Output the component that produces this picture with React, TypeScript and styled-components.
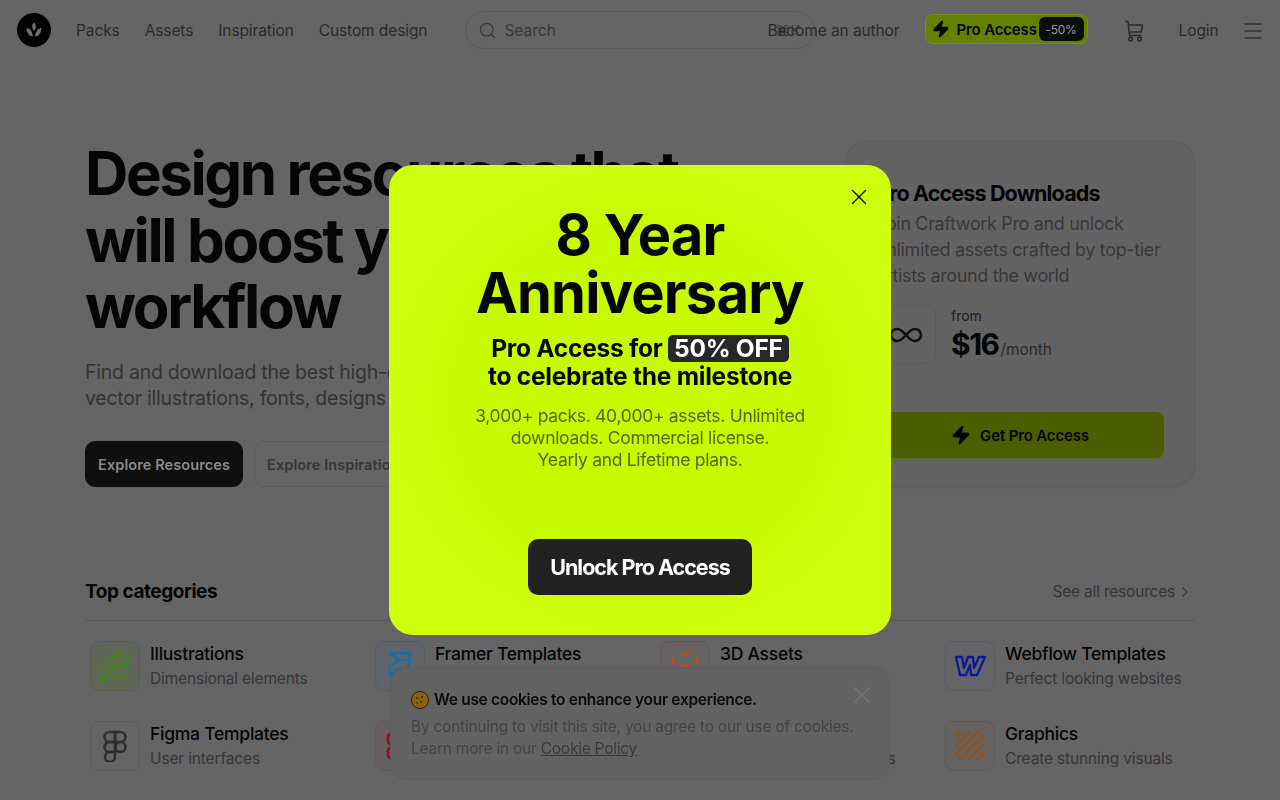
import React from 'react';
import styled, { createGlobalStyle } from 'styled-components';
import { ChevronRight, Infinity as InfinityIcon, Menu, PenTool, Search, X, Zap } from 'lucide-react';

// the page sits dimmed behind the promo modal, so its palette is the dimmed one
const GlobalStyle = createGlobalStyle`
  html, body {
    margin: 0;
    height: 100%;
    overflow: hidden;
    background: #656565;
    font-family: Inter, "Liberation Sans", sans-serif;
    color: #050505;
  }
  * { box-sizing: border-box; }
`;

const Header = styled.header`
  height: 60px;
  padding: 0 15px 0 17px;
  display: flex;
  align-items: center;
`;

const Logo = styled.div`
  width: 34px;
  height: 34px;
  border-radius: 50%;
  background: #020202;
  display: flex;
  align-items: center;
  justify-content: center;
  margin-right: 25px;
  svg { display: block; }
`;

const Nav = styled.nav`
  display: flex;
  gap: 25px;
  padding-top: 2px;
`;

const NavLink = styled.span`
  font-size: 15.5px;
  line-height: 20px;
  color: #2a2a2a;
  white-space: nowrap;
  letter-spacing: -0.1px;
`;

const SearchBox = styled.div`
  width: 350px;
  height: 38px;
  margin-left: 38px;
  padding: 0 14px 0 12px;
  border: 1px solid #5a5a5a;
  border-radius: 19px;
  display: flex;
  align-items: center;
  gap: 7px;
  flex-shrink: 0;
  color: #383838;
  font-size: 15.5px;
`;

const Shortcut = styled.span`
  margin-left: auto;
  font-size: 15px;
  color: #383838;
`;

const HeaderRight = styled.div`
  margin-left: -48px;
  flex: 1;
  display: flex;
  align-items: center;
  padding-top: 2px;
`;

const ProButton = styled.div`
  width: 163px;
  height: 30px;
  margin: -4px 0 0 25px;
  padding: 0 3px 0 6px;
  border-radius: 8px;
  background: #657f00;
  border: 1px solid #76920a;
  display: flex;
  align-items: center;
  font-size: 15px;
  font-weight: 600;
  letter-spacing: -0.15px;
  color: #050505;
  white-space: nowrap;
`;

const ProBolt = styled(Zap)`
  margin-right: 7px;
  flex-shrink: 0;
`;

const Discount = styled.span`
  margin-left: auto;
  height: 24px;
  flex: 0 0 45px;
  border-radius: 6px;
  background: #0d0d0d;
  color: #989898;
  font-size: 12px;
  font-weight: 400;
  letter-spacing: -0.3px;
  display: flex;
  align-items: center;
  justify-content: center;
`;

const CartGlyph = styled.svg`
  margin-left: 36px;
  flex-shrink: 0;
`;

const LoginLink = styled(NavLink)`
  margin-left: 35px;
`;

const BurgerIcon = styled(Menu)`
  margin-left: auto;
  color: #333333;
`;

const Main = styled.main`
  width: 1110px;
  margin: 0 auto;
`;

const Hero = styled.section`
  padding-top: 81px;
  display: flex;
  justify-content: space-between;
`;

const HeroText = styled.div`
  margin-top: -1px;
`;

const Headline = styled.h1`
  margin: 0;
  font-size: 60px;
  line-height: 66.5px;
  font-weight: 700;
  letter-spacing: -2.4px;
  white-space: nowrap;
`;

const Lead = styled.p`
  margin: 19px 0 0;
  font-size: 19.5px;
  line-height: 26px;
  color: #333333;
  letter-spacing: -0.25px;
  white-space: nowrap;
`;

const HeroButtons = styled.div`
  margin-top: 30px;
  display: flex;
  gap: 11px;
`;

const HeroButton = styled.div<{ $dark?: boolean }>`
  height: 46px;
  padding: 1px 12px 0;
  border-radius: 10px;
  display: flex;
  align-items: center;
  font-size: 14.5px;
  font-weight: 600;
  letter-spacing: 0.1px;
  white-space: nowrap;
  background: ${(p) => (p.$dark ? '#0f0f0f' : '#656565')};
  color: ${(p) => (p.$dark ? '#8a8a8a' : '#363636')};
  border: 1px solid ${(p) => (p.$dark ? '#0f0f0f' : '#5c5c5c')};
`;

const PriceCard = styled.aside`
  width: 350px;
  height: 345px;
  padding: 38px 30px 0;
  border: 1px solid #5e5e5e;
  border-radius: 22px;
  background: #636363;
  box-shadow: 0 2px 2px rgba(0, 0, 0, 0.06);
`;

const CardTitle = styled.h2`
  margin: 0;
  font-size: 21.5px;
  line-height: 26px;
  font-weight: 700;
  letter-spacing: -0.85px;
  white-space: nowrap;
`;

const CardText = styled.p`
  margin: 5px 0 0;
  font-size: 18px;
  line-height: 26px;
  color: #383838;
  letter-spacing: -0.35px;
  white-space: nowrap;
`;

const PriceRow = styled.div`
  margin-top: 16px;
  display: flex;
  align-items: flex-start;
  gap: 15px;
`;

const InfinityBox = styled.div`
  width: 60px;
  height: 59px;
  border: 1px solid #5c5c5c;
  border-radius: 10px;
  display: flex;
  align-items: center;
  justify-content: center;
  color: #111111;
`;

const PriceCol = styled.div`
  display: flex;
  flex-direction: column;
`;

const PriceFrom = styled.span`
  font-size: 14px;
  line-height: 22px;
  color: #1c1c1c;
`;

const PriceLine = styled.div`
  display: flex;
  align-items: baseline;
`;

const PriceValue = styled.span`
  font-size: 30px;
  line-height: 34px;
  font-weight: 700;
  letter-spacing: -1.5px;
`;

const PricePeriod = styled.span`
  font-size: 15.5px;
  color: #2a2a2a;
  letter-spacing: -0.1px;
  margin-left: 2px;
`;

const GetButton = styled.div`
  margin-top: 48px;
  height: 46px;
  width: 288px;
  border-radius: 8px;
  background: #4c5e00;
  box-shadow: 0 1px 0 #5c6f08;
  display: flex;
  align-items: center;
  justify-content: center;
  gap: 9px;
  font-size: 15px;
  font-weight: 600;
  letter-spacing: -0.15px;
`;

const SectionHead = styled.div`
  margin-top: 88px;
  height: 46px;
  padding-bottom: 11px;
  display: flex;
  align-items: center;
  justify-content: space-between;
  border-bottom: 1px solid #595959;
`;

const SectionTitle = styled.h3`
  margin: 0;
  font-size: 19px;
  font-weight: 700;
  letter-spacing: -0.45px;
`;

const SeeAll = styled.span`
  display: flex;
  align-items: center;
  gap: 2px;
  margin-right: 2px;
  font-size: 15.5px;
  color: #353535;
  letter-spacing: -0.2px;
`;

const CategoryGrid = styled.div`
  margin-top: 20px;
  padding-left: 5px;
  display: grid;
  grid-template-columns: repeat(4, 285px);
  row-gap: 30px;
`;

const Category = styled.div`
  display: flex;
  align-items: center;
  gap: 10px;
  height: 50px;
`;

const Tile = styled.div<{ $tint: string }>`
  width: 50px;
  height: 50px;
  border-radius: 9px;
  border: 1px solid #5c5c5c;
  background: ${(p) => p.$tint};
  flex-shrink: 0;
  display: flex;
  align-items: center;
  justify-content: center;
`;

const NibIcon = styled(PenTool)`
  color: #458518;
  transform: rotate(-90deg);
`;

const CategoryLabel = styled.div`
  padding-top: 2px;
`;

const CategoryTitle = styled.div`
  font-size: 17.5px;
  line-height: 24px;
  font-weight: 500;
  letter-spacing: -0.25px;
  white-space: nowrap;
`;

const CategorySub = styled.div`
  margin-top: 1px;
  font-size: 15.5px;
  line-height: 24px;
  color: #363636;
  letter-spacing: -0.15px;
  white-space: nowrap;
`;

const Backdrop = styled.div`
  position: fixed;
  inset: 0;
  display: flex;
  align-items: center;
  justify-content: center;
  z-index: 10;
`;

const Modal = styled.div`
  position: relative;
  width: 502px;
  height: 470px;
  padding-top: 41px;
  border-radius: 24px;
  background: radial-gradient(closest-side, #c8f900 0%, #c9fb00 75%, #cfff0c 100%);
  text-align: center;
  display: flex;
  flex-direction: column;
  align-items: center;
`;

const ModalClose = styled(X)`
  position: absolute;
  top: 19px;
  right: 19px;
  color: #101010;
`;

const ModalTitle = styled.h2`
  margin: 0;
  font-size: 56px;
  line-height: 58px;
  font-weight: 700;
  letter-spacing: -0.8px;
`;

const ModalSub = styled.p`
  margin: 12px 0 0;
  font-size: 24.5px;
  line-height: 28px;
  font-weight: 700;
  letter-spacing: -0.25px;
`;

const OffBadge = styled.span`
  display: inline-block;
  padding: 0 6px;
  line-height: 27px;
  border-radius: 5px;
  background: #26282a;
  color: #ffffff;
`;

const ModalText = styled.p`
  margin: 15px 0 0;
  font-size: 17.5px;
  line-height: 22px;
  letter-spacing: -0.3px;
  color: #566800;
`;

const UnlockButton = styled.div`
  margin-top: 68px;
  width: 224px;
  height: 56px;
  border-radius: 10px;
  background: #222222;
  color: #ffffff;
  font-size: 21.5px;
  font-weight: 700;
  letter-spacing: -1px;
  display: flex;
  align-items: center;
  justify-content: center;
`;

const CookieBar = styled.div`
  position: fixed;
  left: 390px;
  top: 667px;
  width: 500px;
  height: 113px;
  padding: 21px 20px 0;
  border-radius: 16px;
  border: 1px solid #5e5e5e;
  background: #636363;
  z-index: 11;
`;

const CookieClose = styled(X)`
  position: absolute;
  top: 13px;
  right: 13px;
  color: #767676;
`;

const CookieTitle = styled.div`
  display: flex;
  align-items: center;
  gap: 5px;
  font-size: 15.5px;
  line-height: 22px;
  font-weight: 600;
  letter-spacing: -0.3px;
  color: #0b0b0b;
`;

const CookieText = styled.p`
  margin: 5px 0 0;
  font-size: 15.5px;
  line-height: 22px;
  color: #444444;
  letter-spacing: -0.24px;
  white-space: nowrap;
`;

const CookieLink = styled.span`
  text-decoration: underline;
  color: #3a3a3a;
`;

const FramerGlyph = () => (
  <svg width="30" height="30" viewBox="0 3 30 30" fill="none" stroke="#1c6ca8" strokeWidth="2.6" strokeLinejoin="round">
    <path d="M5 5 H25 V12 H12 L25 12" />
    <path d="M5 5 L15 12 L5 18 V28 L13 21 H22 L25 12" />
  </svg>
);

const ThreeDGlyph = () => (
  <svg width="28" height="28" viewBox="0 0 28 28" fill="none" stroke="#c24a22" strokeWidth="2.4" strokeLinecap="round" strokeLinejoin="round">
    <path d="M11 3 L14 1.5 L17 3" />
    <path d="M10 13 L14 15 L18 13" />
    <path d="M2 7 L1.5 11 L4 10" />
    <path d="M26 7 L26.5 11 L24 10" />
  </svg>
);

const WebflowGlyph = () => (
  <svg width="32" height="24" viewBox="0 0 32 24" fill="none" stroke="#10189a" strokeWidth="2.3" strokeLinejoin="round">
    <path d="M2 3 H8 L10 14 L14 3 H19 L20 14 L25 3 H31 L23 21 H17 L16 11 L12 21 H6 Z" />
  </svg>
);

const FigmaGlyph = () => (
  <svg width="26" height="32" viewBox="0 0 26 32" fill="none" stroke="#2f2f2f" strokeWidth="2.6">
    <path d="M13 2 H7.5 a5 5 0 0 0 0 10 H13 Z" />
    <path d="M13 2 H18.5 a5 5 0 0 1 0 10 H13 Z" />
    <path d="M13 12 H7.5 a5 5 0 0 0 0 10 H13 Z" />
    <circle cx="18.5" cy="17" r="5" />
    <path d="M7.5 22 H13 V27 a5 5 0 1 1 -5.5 -5 Z" />
  </svg>
);

const PresentGlyph = () => (
  <svg width="30" height="30" viewBox="0 0 30 30" fill="none" stroke="#8f1228" strokeWidth="3">
    <rect x="3" y="3" width="10" height="10" rx="3" />
    <rect x="17" y="3" width="10" height="10" rx="3" />
    <rect x="3" y="17" width="10" height="10" rx="3" />
    <rect x="17" y="17" width="10" height="10" rx="3" />
  </svg>
);

const CubeGlyph = () => (
  <svg width="28" height="28" viewBox="0 0 28 28" fill="none" stroke="#333333" strokeWidth="2">
    <path d="M14 3 L25 9 V20 L14 26 L3 20 V9 Z" />
  </svg>
);

const StripesGlyph = () => (
  <svg width="30" height="30" viewBox="0 0 30 30" stroke="#8a5628" strokeWidth="3">
    <path d="M0 6 L6 0 M0 15 L15 0 M0 24 L24 0 M4 29 L29 4 M13 29 L29 13 M22 29 L29 22" />
  </svg>
);

const categories = [
  { title: 'Illustrations', sub: 'Dimensional elements', tint: '#5f6858', icon: <NibIcon size={36} strokeWidth={1.4} /> },
  { title: 'Framer Templates', sub: 'No-code websites', tint: '#5f656a', icon: <FramerGlyph /> },
  { title: '3D Assets', sub: 'Ready-made renders', tint: '#676360', icon: <ThreeDGlyph /> },
  { title: 'Webflow Templates', sub: 'Perfect looking websites', tint: '#646469', icon: <WebflowGlyph /> },
  { title: 'Figma Templates', sub: 'User interfaces', tint: '#656565', icon: <FigmaGlyph /> },
  { title: 'Presentations', sub: 'Slides and decks', tint: '#686060', icon: <PresentGlyph /> },
  { title: 'Mockups', sub: 'Realistic product scenes', tint: '#656565', icon: <CubeGlyph /> },
  { title: 'Graphics', sub: 'Create stunning visuals', tint: '#676360', icon: <StripesGlyph /> },
];

const App = () => (
  <>
    <GlobalStyle />
    <Header>
      <Logo>
        <svg width="20" height="20" viewBox="0 0 20 20" fill="#6f6f6f">
          <path d="M10 2 C12.5 5 12.5 8 10 11 C7.5 8 7.5 5 10 2 Z" />
          <path d="M2.5 8 C6 8.5 8.5 11.5 9 16.5 C5 16 2.8 13 2.5 8 Z" />
          <path d="M17.5 8 C14 8.5 11.5 11.5 11 16.5 C15 16 17.2 13 17.5 8 Z" />
        </svg>
      </Logo>
      <Nav>
        <NavLink>Packs</NavLink>
        <NavLink>Assets</NavLink>
        <NavLink>Inspiration</NavLink>
        <NavLink>Custom design</NavLink>
      </Nav>
      <SearchBox>
        <Search size={19} strokeWidth={1.6} />
        Search
        <Shortcut>⌘K</Shortcut>
      </SearchBox>
      <HeaderRight>
        <NavLink>Become an author</NavLink>
        <ProButton>
          <ProBolt size={18} fill="#050505" />
          Pro Access
          <Discount>-50%</Discount>
        </ProButton>
        <CartGlyph width="20" height="22" viewBox="0 0 20 22" fill="none" stroke="#2a2a2a" strokeWidth="1.5" strokeLinejoin="round">
          <path d="M1 1.5 H4 L5.5 15.5 H17.5" />
          <path d="M4.4 5 H18.5 L17.2 12 H5.2" />
          <circle cx="6.5" cy="19" r="1.8" />
          <circle cx="15.5" cy="19" r="1.8" />
        </CartGlyph>
        <LoginLink>Login</LoginLink>
        <BurgerIcon size={24} strokeWidth={1.4} />
      </HeaderRight>
    </Header>
    <Main>
      <Hero>
        <HeroText>
          <Headline>
            Design resources that
            <br />
            will boost your
            <br />
            workflow
          </Headline>
          <Lead>
            Find and download the best high-quality
            <br />
            vector illustrations, fonts, designs and more
          </Lead>
          <HeroButtons>
            <HeroButton $dark>Explore Resources</HeroButton>
            <HeroButton>Explore Inspiration</HeroButton>
          </HeroButtons>
        </HeroText>
        <PriceCard>
          <CardTitle>Pro Access Downloads</CardTitle>
          <CardText>
            Join Craftwork Pro and unlock
            <br />
            unlimited assets crafted by top-tier
            <br />
            artists around the world
          </CardText>
          <PriceRow>
            <InfinityBox>
              <InfinityIcon size={36} strokeWidth={1.7} />
            </InfinityBox>
            <PriceCol>
              <PriceFrom>from</PriceFrom>
              <PriceLine>
                <PriceValue>$16</PriceValue>
                <PricePeriod>/month</PricePeriod>
              </PriceLine>
            </PriceCol>
          </PriceRow>
          <GetButton>
            <Zap size={20} fill="#050505" />
            Get Pro Access
          </GetButton>
        </PriceCard>
      </Hero>
      <SectionHead>
        <SectionTitle>Top categories</SectionTitle>
        <SeeAll>
          See all resources
          <ChevronRight size={16} strokeWidth={1.6} />
        </SeeAll>
      </SectionHead>
      <CategoryGrid>
        {categories.map((c) => (
          <Category key={c.title}>
            <Tile $tint={c.tint}>{c.icon}</Tile>
            <CategoryLabel>
              <CategoryTitle>{c.title}</CategoryTitle>
              <CategorySub>{c.sub}</CategorySub>
            </CategoryLabel>
          </Category>
        ))}
      </CategoryGrid>
    </Main>
    <Backdrop>
      <Modal>
        <ModalClose size={26} strokeWidth={1.25} />
        <ModalTitle>
          8 Year
          <br />
          Anniversary
        </ModalTitle>
        <ModalSub>
          Pro Access for <OffBadge>50% OFF</OffBadge>
          <br />
          to celebrate the milestone
        </ModalSub>
        <ModalText>
          3,000+ packs. 40,000+ assets. Unlimited
          <br />
          downloads. Commercial license.
          <br />
          Yearly and Lifetime plans.
        </ModalText>
        <UnlockButton>Unlock Pro Access</UnlockButton>
      </Modal>
    </Backdrop>
    <CookieBar>
      <CookieClose size={28} strokeWidth={1.1} />
      <CookieTitle>
        <svg width="18" height="18" viewBox="0 0 18 18">
          <circle cx="9" cy="9" r="8.5" fill="#8a6410" stroke="#2a2208" strokeWidth="1" />
          <circle cx="6" cy="7" r="1" fill="#2a2208" />
          <circle cx="11" cy="6" r="1" fill="#2a2208" />
          <circle cx="10" cy="11" r="1" fill="#2a2208" />
          <circle cx="6" cy="12" r="0.8" fill="#2a2208" />
        </svg>
        We use cookies to enhance your experience.
      </CookieTitle>
      <CookieText>
        By continuing to visit this site, you agree to our use of cookies.
        <br />
        Learn more in our <CookieLink>Cookie Policy</CookieLink>
      </CookieText>
    </CookieBar>
  </>
);

export default App;
